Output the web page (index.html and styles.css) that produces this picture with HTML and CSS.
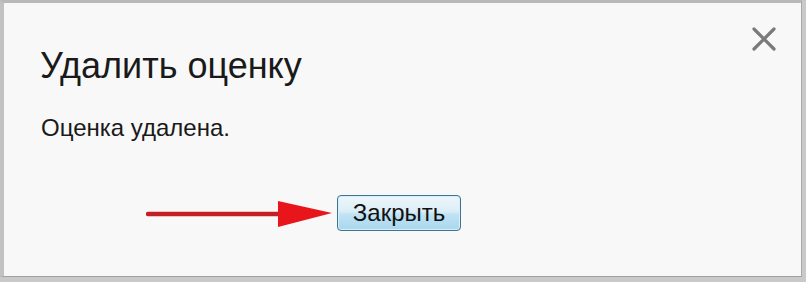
FILE: index.html
```html
<!DOCTYPE html>
<html lang="ru">
<head>
<meta charset="utf-8">
<link rel="stylesheet" href="styles.css">
</head>
<body>
<div class="dialog">
  <button class="close" aria-label="Закрыть">
    <svg width="26" height="26" viewBox="0 0 26 26"><path d="M3 3 L23 23 M23 3 L3 23" stroke="#7a7a7a" stroke-width="3.2" stroke-linecap="round"/></svg>
  </button>
  <h1 class="title">Удалить оценку</h1>
  <p class="message">Оценка удалена.</p>
  <div class="actions">
    <svg class="arrow" width="190" height="30" viewBox="0 0 190 30">
      <line x1="2" y1="16" x2="140" y2="16" stroke="#c41f22" stroke-width="4.5" stroke-linecap="round"/>
      <polygon points="132,3 186,15 132,29" fill="#e8151a"/>
    </svg>
    <button class="btn">Закрыть</button>
  </div>
</div>
</body>
</html>
```
FILE: styles.css
```css
html, body { margin: 0; padding: 0; }
body {
  width: 806px;
  height: 282px;
  background: #c9c9c9;
  font-family: "Liberation Sans", Arial, sans-serif;
  overflow: hidden;
}
.dialog {
  position: relative;
  box-sizing: border-box;
  width: 802px;
  height: 277px;
  margin: 0;
  border-top: 3px solid #b9b9b9;
  border-left: 4px solid #c2c2c2;
  border-right: 1px solid #a8a8a8;
  border-bottom: 1px solid #a0a0a0;
  background: #f8f8f8;
  padding: 42px 0 0 36px;
}
.close {
  position: absolute;
  top: 23px;
  right: 24px;
  padding: 0;
  border: 0;
  background: none;
  line-height: 0;
}
.title {
  margin: 0;
  font-size: 36px;
  font-weight: normal;
  color: #1a1a1a;
  line-height: 42px;
}
.message {
  margin: 27px 0 0 1px;
  font-size: 24px;
  color: #1a1a1a;
  line-height: 28px;
}
.actions {
  display: flex;
  align-items: center;
  margin: 53px 0 0 106px;
}
.arrow { display: block; margin-right: 1px; }
.btn {
  box-sizing: border-box;
  width: 124px;
  height: 36px;
  border: 1px solid #3c7590;
  border-radius: 4px;
  background: linear-gradient(#eef7fc 0%, #dcedf7 45%, #bfe2f4 55%, #a9d7ef 100%);
  box-shadow: inset 0 0 0 1px #d8eef9;
  font-family: "Liberation Sans", Arial, sans-serif;
  font-size: 24px;
  color: #111;
  padding: 0;
}
```
